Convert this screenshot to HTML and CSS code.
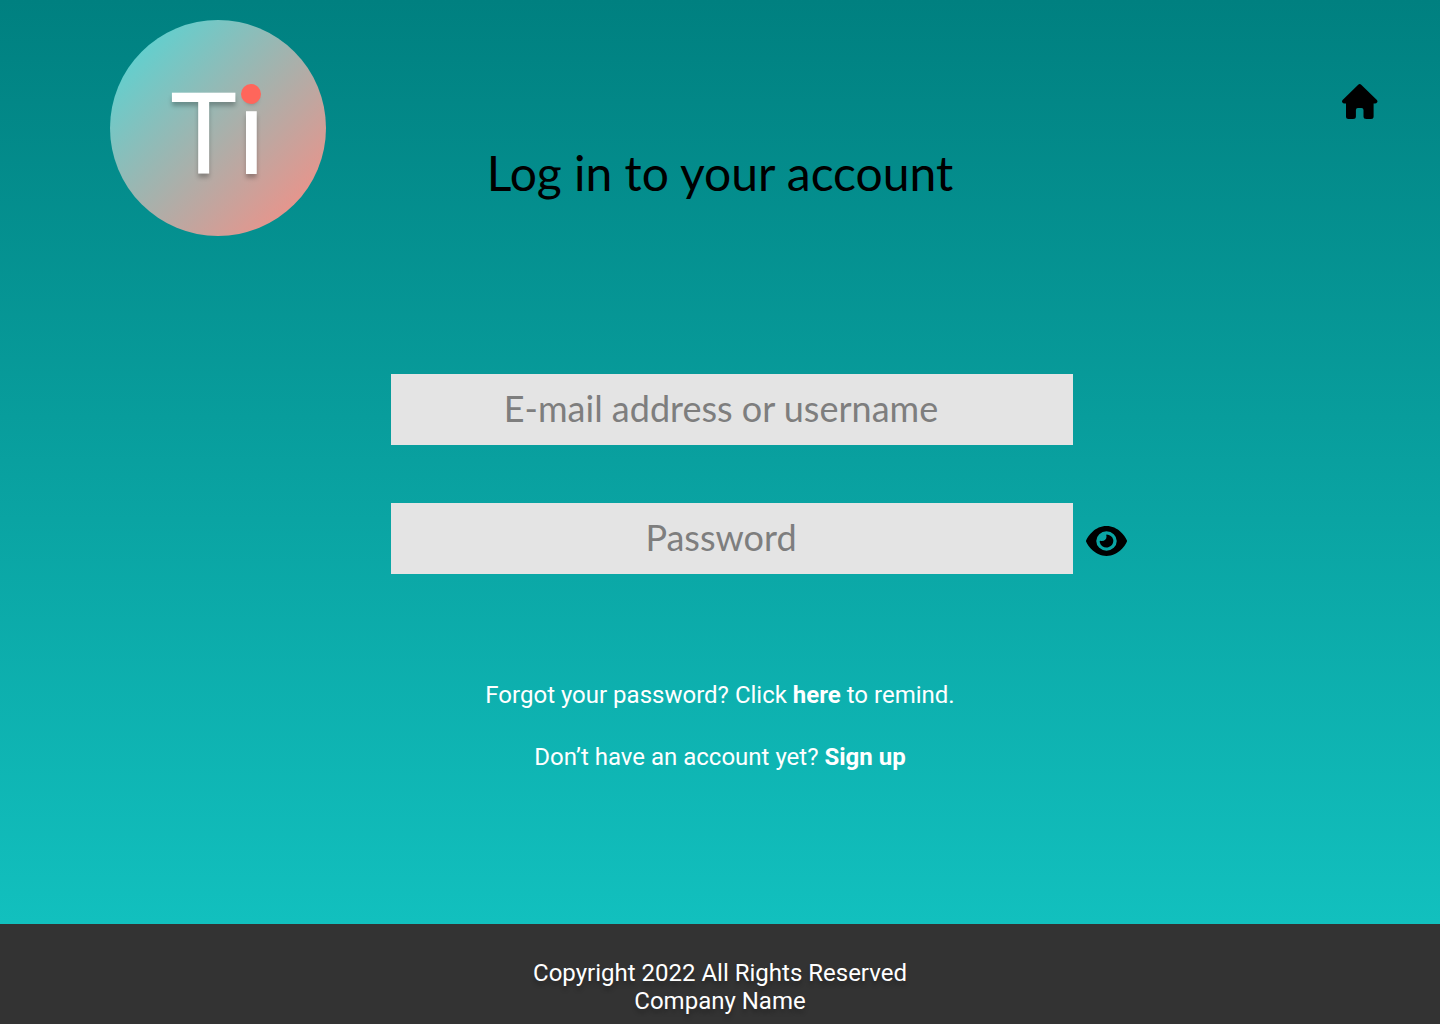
FILE: index.html
```html
<!DOCTYPE html>
<html lang="en">
<head>
  <meta charset="utf-8">
  <meta name="viewport" content="width=device-width, initial-scale=1">
  <title>Log in</title>
  <link rel="stylesheet" href="styles.css">
</head>
<body>
  <header class="header">
    <div class="logo"><span class="logo-text">T<span class="logo-i">i</span></span></div>
    <h1 class="title">Log in to your account</h1>
    <a class="home" href="#" aria-label="Home">
      <svg class="home-icon" viewBox="0 0 36 36" aria-hidden="true">
        <path d="M16.2.8Q17.7-.6 19.2.8L34.9 16Q36 17.4 35 18.6Q34.400 19.500 33 19.500H31.600V32.500Q31.600 35 29 35H24.500Q21.500 35 21.500 32.500V26Q21.500 24 19.500 24H15.900Q13.900 24 13.900 26V32.500Q13.900 35 11 35H6.500Q4 35 4 32.500V19.500H2.500Q1 19.500.400 18.600Q-.500 17.400.600 16Z"/>
      </svg>
    </a>
  </header>

  <main class="main">
    <form class="form">
      <input class="field" type="text" name="user" placeholder="E-mail address or username" aria-label="E-mail address or username">
      <input class="field" type="password" name="password" placeholder="Password" aria-label="Password">
      <button class="reveal" type="button" aria-label="Show password">
        <svg class="eye-icon" viewBox="0 32 576 448" preserveAspectRatio="none" aria-hidden="true">
          <path d="M288 32c-80.8 0-145.5 36.8-192.6 80.6C48.600 156 17.300 208 2.500 243.700c-3.300 7.900-3.300 16.700 0 24.600C17.300 304 48.600 356 95.400 399.400C142.500 443.200 207.200 480 288 480s145.500-36.800 192.600-80.600c46.800-43.500 78.100-95.400 93-131.100c3.300-7.900 3.300-16.700 0-24.600c-14.900-35.700-46.200-87.700-93-131.100C433.500 68.800 368.800 32 288 32zM144 256a144 144 0 1 1 288 0 144 144 0 1 1 -288 0zm144-64c0 35.300-28.700 64-64 64c-7.100 0-13.900-1.200-20.300-3.300c-5.500-1.800-11.900 1.600-11.700 7.400c.3 6.900 1.300 13.800 3.200 20.700c13.700 51.200 66.400 81.600 117.600 67.900s81.600-66.400 67.900-117.600c-11.100-41.500-47.800-69.400-88.600-71.100c-5.800-.2-9.200 6.100-7.400 11.700c2.100 6.400 3.300 13.200 3.300 20.300z"/>
        </svg>
      </button>
    </form>
    <p class="note">Forgot your password? Click <a class="link" href="#">here</a> to remind.</p>
    <p class="note">Don’t have an account yet? <a class="link" href="#">Sign up</a></p>
  </main>

  <footer class="footer">
    <p class="footer-line">Copyright 2022 All Rights Reserved</p>
    <p class="footer-line">Company Name</p>
  </footer>
</body>
</html>
```
FILE: styles.css
```css
* {
  box-sizing: border-box;
}

body {
  display: flex;
  flex-direction: column;
  min-height: 100vh;
  margin: 0;
  background: linear-gradient(180deg, #008080, #12c1bf 936px);
  font-family: Roboto, "Liberation Sans", sans-serif;
  font-size: 24px;
  line-height: 28px;
  color: #fff;
}

.header {
  display: grid;
  grid-template-columns: 1fr auto 1fr;
  padding: 20px 62px 0;
}

.logo {
  display: flex;
  align-items: center;
  justify-content: center;
  width: 216px;
  height: 216px;
  margin-left: 48px;
  padding-top: 8px;
  border-radius: 50%;
  background: linear-gradient(135deg, #4adada, #ff8a80);
}

.logo-text {
  font-family: Lato, sans-serif;
  font-size: 113px;
  line-height: 136px;
  text-shadow: 0 4px 4px rgba(0, 0, 0, 0.25);
}

.logo-i {
  position: relative;
  font-family: Roboto, sans-serif;
  font-size: 118px;
}

/* red dot laid over the tittle of the i */
.logo-i::after {
  content: "";
  position: absolute;
  top: 19px;
  left: 50%;
  width: 20px;
  height: 20px;
  margin-left: -10px;
  border-radius: 50%;
  background: #ff665b;
}

.title {
  margin: 124px 0 0;
  font-family: Lato, sans-serif;
  font-size: 48px;
  font-weight: 400;
  line-height: 58px;
  color: #000;
}

.home {
  justify-self: end;
  margin-top: 64px;
  height: 36px;
}

.home-icon {
  display: block;
  width: 36px;
  height: 36px;
}

.main {
  flex: 1;
  padding: 138px 0 32px;
  text-align: center;
}

.form {
  display: grid;
  grid-template-columns: 1fr minmax(0, 682px) 1fr;
  gap: 58px 13px;
  padding-left: 24px;
  margin-bottom: 107px;
}

.field {
  grid-column: 2;
  width: 100%;
  height: 71px;
  padding: 0 22px 4px 0;
  border: 0;
  border-radius: 0;
  background: #e4e4e4;
  font-family: Lato, sans-serif;
  font-size: 36px;
  text-align: center;
  color: #000;
}

.field::placeholder {
  color: #7e7e7e;
  opacity: 1;
}

.reveal {
  grid-column: 3;
  place-self: center start;
  padding: 4px 0 0;
  border: 0;
  background: none;
  cursor: pointer;
}

.eye-icon {
  display: block;
  width: 41px;
  height: 30px;
}

.note {
  margin: 0 0 34px;
}

.link {
  font-weight: 700;
  color: inherit;
  text-decoration: none;
}

.footer {
  min-height: 100px;
  padding: 35px 0 9px;
  background: #333;
  text-align: center;
  text-shadow: 0 4px 4px rgba(0, 0, 0, 0.25);
}

.footer-line {
  margin: 0;
}
```
